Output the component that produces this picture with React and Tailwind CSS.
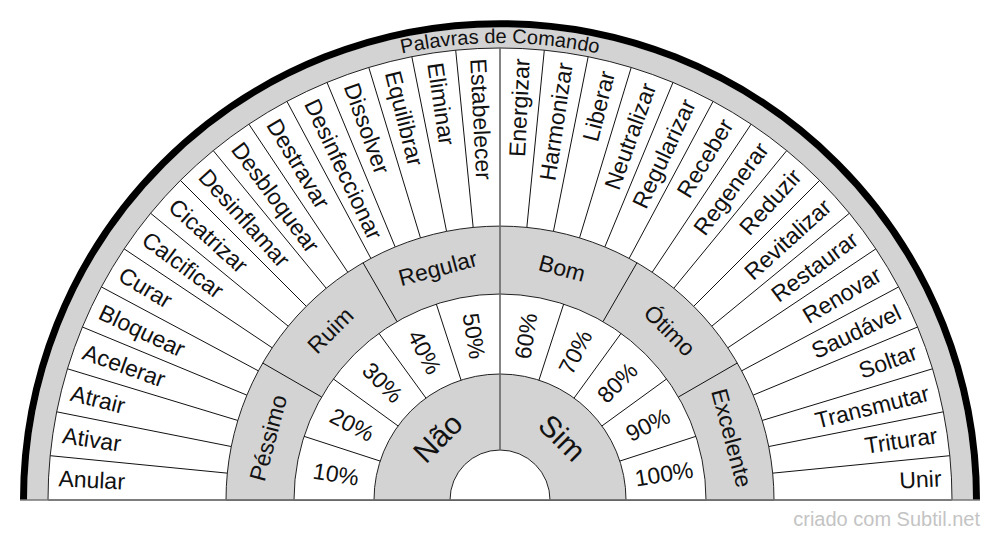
import React from "react";

const CX = 500;
const CY = 500;
const rad = (d) => (d * Math.PI) / 180;
const pt = (r, d) => [CX + r * Math.cos(rad(d)), CY - r * Math.sin(rad(d))];

const words = [
  "Anular", "Ativar", "Atrair", "Acelerar", "Bloquear", "Curar", "Calcificar", "Cicatrizar",
  "Desinflamar", "Desbloquear", "Destravar", "Desinfeccionar", "Dissolver", "Equilibrar", "Eliminar", "Estabelecer",
  "Energizar", "Harmonizar", "Liberar", "Neutralizar", "Regularizar", "Receber", "Regenerar", "Reduzir",
  "Revitalizar", "Restaurar", "Renovar", "Saudável", "Soltar", "Transmutar", "Triturar", "Unir",
];
const percents = ["10%", "20%", "30%", "40%", "50%", "60%", "70%", "80%", "90%", "100%"];
const quality = ["Péssimo", "Ruim", "Regular", "Bom", "Ótimo", "Excelente"];

const half = (r) => `M ${CX - r} ${CY} A ${r} ${r} 0 0 1 ${CX + r} ${CY} Z`;

function Radial({ r1, r2, deg, stroke = "#111", w = 1 }) {
  const [x1, y1] = pt(r1, deg);
  const [x2, y2] = pt(r2, deg);
  return <line x1={x1} y1={y1} x2={x2} y2={y2} stroke={stroke} strokeWidth={w} />;
}

export default function App() {
  const wStep = 180 / 32;
  return (
    <div className="w-[1000px] h-[540px] bg-white">
      <svg
        width="1000"
        height="540"
        viewBox="0 0 1000 540"
        className="block font-['Liberation_Sans',Arial,sans-serif]"
      >
        <path d={half(473)} fill="#d3d3d3" />
        <path d={half(452)} fill="#fff" stroke="#222" strokeWidth="1" />
        <path d={half(274)} fill="#d3d3d3" stroke="#222" strokeWidth="1" />
        <path d={half(206)} fill="#fff" stroke="#222" strokeWidth="1" />
        <path d={half(126)} fill="#d3d3d3" stroke="#222" strokeWidth="1" />
        <path d={half(50)} fill="#fff" stroke="#222" strokeWidth="1" />

        {Array.from({ length: 31 }, (_, i) => i + 1)
          .filter((i) => i !== 16)
          .map((i) => (
            <Radial key={"w" + i} r1={274} r2={452} deg={i * wStep} />
          ))}
        {Array.from({ length: 9 }, (_, i) => i + 1)
          .filter((i) => i !== 5)
          .map((i) => (
            <Radial key={"p" + i} r1={126} r2={206} deg={i * 18} />
          ))}
        {[30, 60, 120, 150].map((d) => (
          <Radial key={"q" + d} r1={206} r2={274} deg={d} />
        ))}
        <Radial r1={50} r2={452} deg={90} stroke="#666" w={1.6} />

        <path
          d={`M ${CX - 476.5} ${CY} A 476.5 476.5 0 0 1 ${CX + 476.5} ${CY}`}
          fill="none"
          stroke="#000"
          strokeWidth="7"
        />
        <line x1="20" y1="500" x2="980" y2="500" stroke="#777" strokeWidth="1.6" />

        <path id="topArc" d={`M ${CX - 457} ${CY} A 457 457 0 0 1 ${CX + 457} ${CY}`} fill="none" />
        <text fontSize="20" fill="#111">
          <textPath href="#topArc" startOffset="50%" textAnchor="middle">
            Palavras de Comando
          </textPath>
        </text>

        {words.map((w, i) => {
          const th = 180 - (i + 0.5) * wStep;
          const left = th > 90;
          const [x, y] = pt(442, th);
          const rot = left ? 180 - th : -th;
          return (
            <text
              key={w}
              x={x}
              y={y}
              dy="0.35em"
              fontSize="23"
              fill="#111"
              textAnchor={left ? "start" : "end"}
              transform={`rotate(${rot} ${x} ${y})`}
            >
              {w}
            </text>
          );
        })}

        {percents.map((p, k) => {
          const th = 180 - (k + 0.5) * 18;
          const left = th > 90;
          const [x, y] = pt(166, th);
          const rot = left ? 180 - th : -th;
          return (
            <text
              key={p}
              x={x}
              y={y}
              dy="0.35em"
              fontSize="23"
              fill="#111"
              textAnchor="middle"
              transform={`rotate(${rot} ${x} ${y})`}
            >
              {p}
            </text>
          );
        })}

        {quality.map((q, k) => {
          const th = 180 - (k + 0.5) * 30;
          const [x, y] = pt(240, th);
          return (
            <text
              key={q}
              x={x}
              y={y}
              dy="0.35em"
              fontSize="23"
              fill="#111"
              textAnchor="middle"
              transform={`rotate(${90 - th} ${x} ${y})`}
            >
              {q}
            </text>
          );
        })}

        {[
          ["Não", 135],
          ["Sim", 45],
        ].map(([t, th]) => {
          const [x, y] = pt(88, th);
          return (
            <text
              key={t}
              x={x}
              y={y}
              dy="0.35em"
              fontSize="30"
              fill="#111"
              textAnchor="middle"
              transform={`rotate(${90 - th} ${x} ${y})`}
            >
              {t}
            </text>
          );
        })}

        <text x="980" y="526" fontSize="20" fill="#c4c4c4" textAnchor="end">
          criado com Subtil.net
        </text>
      </svg>
    </div>
  );
}
